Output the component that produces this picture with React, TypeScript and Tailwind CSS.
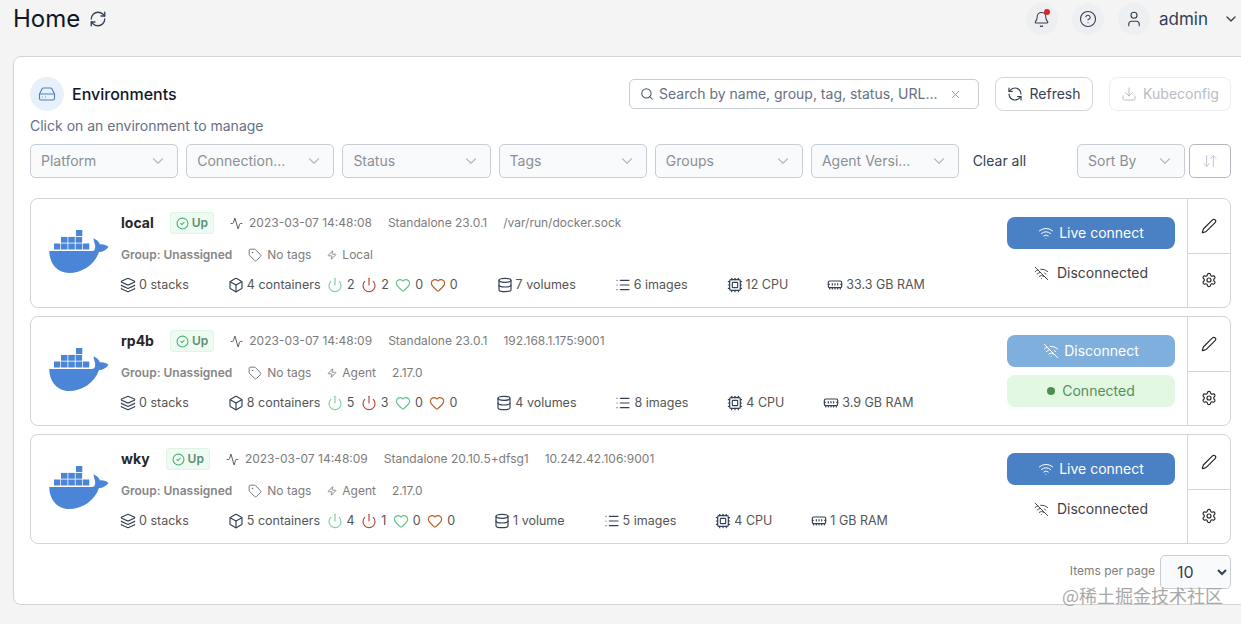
import {
  Activity,
  ArrowDownUp,
  Bell,
  Box,
  ChevronDown,
  CircleCheck,
  CircleHelp,
  Cpu,
  Database,
  Download,
  HardDrive,
  Heart,
  Layers,
  List,
  MemoryStick,
  Pen,
  Power,
  RefreshCcw,
  RefreshCw,
  Search,
  Settings,
  Tag,
  User,
  Wifi,
  WifiOff,
  X,
  Zap,
} from "lucide-react";

type Env = {
  name: string;
  heartbeat: string;
  engine: string;
  url: string;
  kind: string;
  agent?: string;
  containers: number;
  running: number;
  stopped: number;
  volumes: string;
  images: number;
  cpu: number;
  ram: string;
  connected: boolean;
};

const envs: Env[] = [
  {
    name: "local",
    heartbeat: "2023-03-07 14:48:08",
    engine: "Standalone 23.0.1",
    url: "/var/run/docker.sock",
    kind: "Local",
    containers: 4,
    running: 2,
    stopped: 2,
    volumes: "7 volumes",
    images: 6,
    cpu: 12,
    ram: "33.3 GB RAM",
    connected: false,
  },
  {
    name: "rp4b",
    heartbeat: "2023-03-07 14:48:09",
    engine: "Standalone 23.0.1",
    url: "192.168.1.175:9001",
    kind: "Agent",
    agent: "2.17.0",
    containers: 8,
    running: 5,
    stopped: 3,
    volumes: "4 volumes",
    images: 8,
    cpu: 4,
    ram: "3.9 GB RAM",
    connected: true,
  },
  {
    name: "wky",
    heartbeat: "2023-03-07 14:48:09",
    engine: "Standalone 20.10.5+dfsg1",
    url: "10.242.42.106:9001",
    kind: "Agent",
    agent: "2.17.0",
    containers: 5,
    running: 4,
    stopped: 1,
    volumes: "1 volume",
    images: 5,
    cpu: 4,
    ram: "1 GB RAM",
    connected: false,
  },
];

const filters = ["Platform", "Connection...", "Status", "Tags", "Groups", "Agent Versi..."];

function DockerLogo() {
  return (
    <svg width="60" height="43" viewBox="0 0 60 43" className="shrink-0 fill-[#4b85d8]">
      <rect x="27" y="0" width="6.3" height="6" />
      <rect x="12" y="6.900" width="6.500" height="5.800" />
      <rect x="19.300" y="6.900" width="6.500" height="5.800" />
      <rect x="26.600" y="6.900" width="6.500" height="5.800" />
      <rect x="5" y="13.500" width="6.300" height="6" />
      <rect x="12" y="13.500" width="6.500" height="6" />
      <rect x="19.300" y="13.500" width="6.500" height="6" />
      <rect x="26.600" y="13.500" width="6.500" height="6" />
      <rect x="33.800" y="13.500" width="6.500" height="6" />
      <path d="M0.300 21H43C46 21 46.500 18 46 15C45.500 12.500 44.500 10.500 44.500 8.300C47.500 9.500 50 12 51 14.500C54 14 57 15 59.500 16.700C57 20.500 53 22 50 22C45.500 35 33 43 20 43C8 43 0.300 33 0.300 21Z" />
    </svg>
  );
}

function FilterSelect({ label, className }: { label: string; className: string }) {
  return (
    <div
      className={`flex h-[34px] items-center justify-between rounded-[5px] border border-[#c9cdd4] bg-[#f9fafb] pl-[10px] pr-[10px] text-sm text-[#8b8f96] ${className}`}
    >
      <span>{label}</span>
      <ChevronDown className="h-[18px] w-[18px] text-[#b4b8be]" strokeWidth={1.5} />
    </div>
  );
}

function Stat({ icon, children }: { icon: React.ReactNode; children: React.ReactNode }) {
  return (
    <span className="flex items-center gap-[3px]">
      {icon}
      {children}
    </span>
  );
}

function Count({ icon, children }: { icon: React.ReactNode; children: React.ReactNode }) {
  return (
    <span className="flex items-center gap-1">
      {icon}
      {children}
    </span>
  );
}

function EnvRow({ env }: { env: Env }) {
  const iconCls = "h-4 w-4 text-[#344054]";
  return (
    <div className="flex h-[110px] overflow-hidden rounded-lg border border-[#d4d4d4] bg-white">
      <div className="flex w-[90px] shrink-0 items-center pl-[18px] pb-[4px]">
        <DockerLogo />
      </div>
      <div className="flex min-w-0 flex-1 flex-col pt-[14px] text-xs text-[#7c7c7c]">
        <div className="flex h-[20px] items-center gap-4">
          <span className="text-sm font-bold text-[#27272a]">{env.name}</span>
          <span className="flex h-[22px] items-center gap-[3px] rounded-[3px] border border-[#dcf5e5] bg-[#eefbf2] px-[5px] font-semibold text-[#5c8f6f]">
            <CircleCheck className="h-[13px] w-[13px] text-[#4fb078]" />
            Up
          </span>
          <span className="flex items-center gap-[6px]">
            <Activity className="h-[13px] w-[13px] text-[#555]" strokeWidth={1.75} />
            {env.heartbeat}
          </span>
          <span>{env.engine}</span>
          <span>{env.url}</span>
        </div>
        <div className="mt-[12px] flex h-[20px] items-center gap-4">
          <span className="font-semibold text-[#868686]">Group: Unassigned</span>
          <span className="flex items-center gap-[5px]">
            <Tag className="h-[14px] w-[14px] text-[#666]" strokeWidth={1.5} />
            No tags
          </span>
          <span className="flex items-center gap-[5px]">
            <Zap className="h-[10px] w-[10px] text-[#666]" strokeWidth={1.75} />
            {env.kind}
          </span>
          {env.agent && <span>{env.agent}</span>}
        </div>
        <div className="-ml-[1px] mt-[10px] flex h-[20px] items-center gap-[39px] text-[12.5px] text-[#555]">
          <Stat icon={<Layers className={iconCls} strokeWidth={1.75} />}>0 stacks</Stat>
          <span className="flex items-center gap-[6.500px]">
            <Stat icon={<Box className={iconCls} strokeWidth={1.75} />}>{env.containers} containers</Stat>
            <Count icon={<Power className="h-4 w-4 text-[#7fcf9f]" strokeWidth={1.75} />}>{env.running}</Count>
            <Count icon={<Power className="h-4 w-4 text-[#b5483c]" strokeWidth={1.75} />}>{env.stopped}</Count>
            <Count icon={<Heart className="h-4 w-4 text-[#5fc48a]" strokeWidth={1.75} />}>0</Count>
            <Count icon={<Heart className="h-4 w-4 text-[#b7602a]" strokeWidth={1.75} />}>0</Count>
          </span>
          <Stat icon={<Database className={iconCls} strokeWidth={1.75} />}>{env.volumes}</Stat>
          <Stat icon={<List className={iconCls} strokeWidth={1.75} />}>{env.images} images</Stat>
          <Stat icon={<Cpu className={iconCls} strokeWidth={1.75} />}>{env.cpu} CPU</Stat>
          <Stat icon={<MemoryStick className={iconCls} strokeWidth={1.75} />}>{env.ram}</Stat>
        </div>
      </div>
      <div className="flex w-[168px] shrink-0 flex-col justify-center gap-2 text-sm">
        {env.connected ? (
          <>
            <div className="flex h-8 items-center justify-center gap-[5px] rounded-lg bg-[#7fafdc] text-white">
              <WifiOff className="h-4 w-4" strokeWidth={1.5} />
              Disconnect
            </div>
            <div className="flex h-8 items-center justify-center gap-[7px] rounded-lg bg-[#e2f8e3] text-[#55905a]">
              <span className="h-2 w-2 rounded-full bg-[#4c8f50]" />
              Connected
            </div>
          </>
        ) : (
          <>
            <div className="flex h-8 items-center justify-center gap-[5px] rounded-lg bg-[#4a80c4] text-white">
              <Wifi className="h-4 w-4" strokeWidth={1.5} />
              Live connect
            </div>
            <div className="flex h-8 items-center justify-center gap-[8px] text-[#3f3f46]">
              <WifiOff className="h-[15px] w-[15px]" strokeWidth={1.5} />
              Disconnected
            </div>
          </>
        )}
      </div>
      <div className="ml-3 flex w-[43px] shrink-0 flex-col divide-y divide-[#d4d4d4] border-l border-[#d4d4d4] text-[#27272a]">
        <div className="flex h-[55px] items-center justify-center">
          <Pen className="h-4 w-4" strokeWidth={1.75} />
        </div>
        <div className="flex flex-1 items-center justify-center pb-[1px]">
          <Settings className="h-4 w-4" strokeWidth={1.75} />
        </div>
      </div>
    </div>
  );
}

function HeaderIcon({ children }: { children: React.ReactNode }) {
  return <div className="relative flex h-8 w-8 items-center justify-center rounded-full bg-[#eeeff1]">{children}</div>;
}

export default function App() {
  return (
    <div className="h-[624px] w-[1241px] overflow-hidden bg-[#f4f4f5] font-['Inter',sans-serif]">
      <header className="flex h-[38px] items-center pl-[13px] pr-[2px]">
        <h1 className="text-2xl text-[#101828]">Home</h1>
        <RefreshCw className="ml-[9px] h-[18px] w-[18px] text-[#344054]" strokeWidth={1.75} />
        <div className="ml-auto flex items-center gap-[14px] text-[#344054]">
          <HeaderIcon>
            <Bell className="h-[17px] w-[17px]" strokeWidth={1.5} />
            <span className="absolute right-[8px] top-[6px] h-[6px] w-[6px] rounded-full bg-[#dc2626]" />
          </HeaderIcon>
          <HeaderIcon>
            <CircleHelp className="h-[18px] w-[18px]" strokeWidth={1.5} />
          </HeaderIcon>
          <div className="flex items-center gap-[9px]">
            <HeaderIcon>
              <User className="h-[18px] w-[18px]" strokeWidth={1.5} />
            </HeaderIcon>
            <span className="mt-[1px] text-[17px]">admin</span>
            <ChevronDown className="ml-[6px] h-4 w-4" strokeWidth={2} />
          </div>
        </div>
      </header>

      <main className="ml-[13px] mt-[18px] h-[549px] w-[1235px] rounded-lg border border-[#d4d4d4] bg-white pl-[16px] pr-[16px]">
        <div className="flex pt-[20px]">
          <div className="flex items-center gap-2">
            <div className="flex h-[34px] w-[34px] items-center justify-center rounded-full bg-[#e8f1fb]">
              <HardDrive className="h-[18px] w-[18px] text-[#4a80c4]" strokeWidth={1.5} />
            </div>
            <span className="text-base font-medium text-[#101828]">Environments</span>
          </div>
          <div className="ml-auto flex items-center gap-4">
            <div className="flex h-[30px] w-[350px] items-center rounded-[5px] border border-[#c9cdd4] pl-[10px] pr-[16px] text-sm text-[#667085]">
              <Search className="mr-[5px] h-[14px] w-[14px] text-[#475467]" strokeWidth={1.75} />
              <span>Search by name, group, tag, status, URL...</span>
              <X className="ml-auto h-[13px] w-[13px] text-[#8b8f96]" strokeWidth={1.5} />
            </div>
            <div className="flex h-[34px] w-[98px] items-center justify-center gap-[6px] rounded-lg border border-[#d4d4d4] text-sm text-[#344054]">
              <RefreshCcw className="h-4 w-4" strokeWidth={1.75} />
              Refresh
            </div>
            <div className="flex h-[34px] w-[122px] items-center justify-center gap-[6px] rounded-lg border border-[#eeeeee] text-sm text-[#b9bcc2]">
              <Download className="h-4 w-4" strokeWidth={1.5} />
              Kubeconfig
            </div>
          </div>
        </div>
        <p className="mt-[6px] text-sm leading-[18px] text-[#667085]">Click on an environment to manage</p>
        <div className="mt-[9px] flex items-center">
          <div className="flex gap-2">
            {filters.map((f) => (
              <FilterSelect key={f} label={f} className="w-[148.200px]" />
            ))}
          </div>
          <span className="ml-[13.500px] text-sm text-[#344054]">Clear all</span>
          <div className="ml-auto flex gap-1">
            <FilterSelect label="Sort By" className="w-[108px]" />
            <div className="flex h-[34px] w-[42px] items-center justify-center rounded-[5px] border border-[#b4b8be] text-[#c4c7cc]">
              <ArrowDownUp className="h-4 w-4" strokeWidth={1.5} />
            </div>
          </div>
        </div>
        <div className="mt-[20px] flex flex-col gap-2">
          {envs.map((env) => (
            <EnvRow key={env.name} env={env} />
          ))}
        </div>
        <div className="relative mt-[11px] flex items-center justify-end gap-[5px]">
          <span className="mb-[2px] text-xs text-[#7c7c7c]">Items per page</span>
          <select
            defaultValue="10"
            className="h-[34px] w-[71px] rounded-[5px] border border-[#c9cdd4] bg-[#f9fafb] pl-[12px] text-base text-[#344054]"
          >
            <option value="10">10</option>
            <option value="25">25</option>
          </select>
          <span className="absolute right-[8px] top-[31px] whitespace-nowrap font-['Noto_Sans_CJK_SC',sans-serif] text-lg leading-none text-[#a8a8a8]">
            @稀土掘金技术社区
          </span>
        </div>
      </main>
    </div>
  );
}
